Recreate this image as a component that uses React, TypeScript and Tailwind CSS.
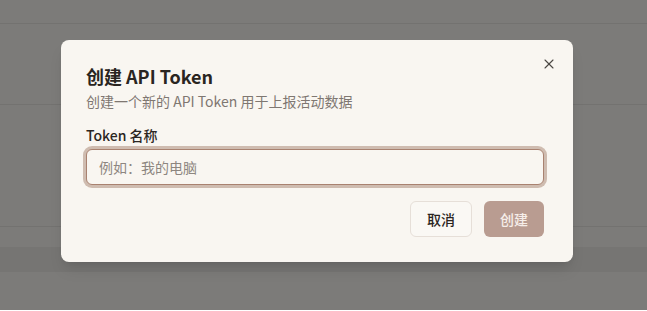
import { X } from 'lucide-react';

const font = { fontFamily: '"Noto Sans CJK SC", "Noto Sans", sans-serif' };

const Backdrop = () => (
  <div className="flex flex-col bg-[#7c7b79]">
    <div className="h-[24px] border-b border-[#737270]" />
    <div className="h-[81px] border-b border-[#737270]" />
    <div className="h-[122px] border-b border-[#737270]" />
    <div className="h-[20px]" />
    <div className="h-[25px] bg-[#767573]" />
    <div className="h-[38px]" />
  </div>
);

const CreateTokenDialog = () => {
  return (
    <div className="absolute inset-0">
      <div className="relative ml-[61px] mt-[40px] w-[512px] rounded-lg bg-[#f9f6f1] pt-[22px] pb-[25px] pl-[25px] pr-[29px] shadow-lg">
        <button className="absolute right-4 top-4 text-[#4a4643]">
          <X size={16} strokeWidth={1.6} />
        </button>
        <h2 className="text-lg font-semibold leading-7 text-[#2a2521]">创建 API Token</h2>
        <p className="mt-px text-sm leading-5 text-[#7f7771]">创建一个新的 API Token 用于上报活动数据</p>
        <label className="mt-[14px] block text-sm font-medium leading-5 text-[#2b2622]">Token 名称</label>
        <input
          placeholder="例如：我的电脑"
          autoFocus
          className="mt-1 block h-9 w-full rounded-md border border-[#a98270] bg-[#f9f6f1] px-3 text-sm text-[#2b2622] caret-black outline-none ring-[3px] ring-[#cfbcb0] placeholder:text-[#8d8680]"
          style={font}
        />
        <div className="mt-4 flex justify-end gap-3">
          <button className="h-9 rounded-md border border-[#e6dfd8] bg-[#faf8f4] px-4 text-sm font-medium text-[#2a2521]">
            取消
          </button>
          <button className="h-9 rounded-md bg-[#b99c91] px-4 text-sm font-medium text-[#f6eee9]">
            创建
          </button>
        </div>
      </div>
    </div>
  );
};

export default function App() {
  return (
    <div className="relative h-[311px] w-[647px] overflow-hidden" style={font}>
      <Backdrop />
      <CreateTokenDialog />
    </div>
  );
}
